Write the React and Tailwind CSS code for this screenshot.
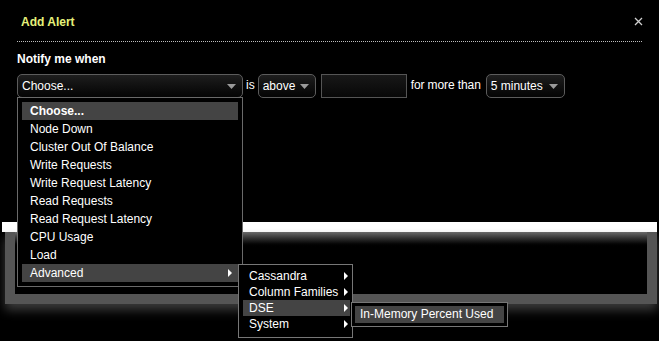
import React from "react";

const font = { fontFamily: '"Liberation Sans", Arial, sans-serif' };

const Caret = () => (
  <svg width="9" height="5" viewBox="0 0 9 5" className="shrink-0">
    <path d="M0 0h9L4.5 5z" fill="#9a9a9a" />
  </svg>
);

const RightArrow = () => (
  <svg width="4" height="8" viewBox="0 0 4 8" className="shrink-0">
    <path d="M0 0l4 4-4 4z" fill="#fff" />
  </svg>
);

const Select = ({ label, width }) => (
  <div
    className={`flex h-[24px] items-center justify-between rounded-[5px] border border-[#5c5c5c] bg-gradient-to-b from-[#1e1e1e] to-[#050505] pl-[4px] pr-[6px] text-[12px] text-white ${width}`}
  >
    <span>{label}</span>
    <Caret />
  </div>
);

const mainItems = [
  "Choose...",
  "Node Down",
  "Cluster Out Of Balance",
  "Write Requests",
  "Write Request Latency",
  "Read Requests",
  "Read Request Latency",
  "CPU Usage",
  "Load",
  "Advanced",
];

const subItems = ["Cassandra", "Column Families", "DSE", "System"];

export default function App() {
  return (
    <div
      className="relative h-[341px] w-[659px] overflow-hidden bg-black text-white"
      style={font}
    >
      {/* Header */}
      <div className="flex h-[41px] items-center justify-between pl-[21px] pr-[16px] pt-[3px]">
        <h1 className="text-[12px] font-bold text-[#e6f27a]">Add Alert</h1>
        <svg width="9" height="9" viewBox="0 0 9 9" className="-mt-[2px]">
          <path d="M1 1l7 7M8 1L1 8" stroke="#d0d0d0" strokeWidth="1.3" />
        </svg>
      </div>
      <div className="ml-[17px] w-[625px] border-t border-dotted border-[#bdbdbd]" />

      <div className="pl-[17px]">
        <p className="mt-[10px] text-[12px] font-bold leading-[14px]">Notify me when</p>

        {/* Condition row */}
        <div className="mt-[8px] flex items-center text-[12px]">
          <Select label="Choose..." width="w-[226px]" />
          <span className="ml-[3px] mr-[3px] -mt-[2px]">is</span>
          <Select label="above" width="w-[58px]" />
          <div className="ml-[5px] h-[24px] w-[86px] border border-[#555] bg-gradient-to-b from-[#181818] to-[#080808]" />
          <span className="ml-[4px] mr-[5px] -mt-[2px] tracking-[-0.1px]">for more than</span>
          <Select label="5 minutes" width="w-[79px]" />
        </div>
      </div>

      {/* Background panel behind the menu */}
      <div className="mt-[124px]">
        <div className="ml-[2px] h-[10px] w-[655px] bg-white" />
        <div className="ml-[5px] h-[72px] w-[652px] bg-[#555] px-[10px] pb-[10px] shadow-[0_6px_10px_rgba(110,110,110,0.55)]">
          <div className="h-full bg-gradient-to-b from-[#6a6a6a] via-[#000] via-[25%] to-black" />
        </div>
      </div>

      {/* Main dropdown */}
      <div className="absolute left-[17px] top-[97px] w-[226px] border border-[#6a6a6a] bg-black p-[4px] text-[12px]">
        {mainItems.map((item, i) => (
          <div
            key={item}
            className={`flex h-[18px] items-center justify-between pl-[8px] pr-[6px] leading-[18px] ${
              i === 0 || i === mainItems.length - 1 ? "bg-[#444]" : ""
            } ${i === 0 ? "font-bold" : ""}`}
          >
            <span>{item}</span>
            {item === "Advanced" && <RightArrow />}
          </div>
        ))}
      </div>

      {/* Advanced submenu */}
      <div className="absolute left-[238px] top-[264px] w-[115px] border border-[#777] bg-black pb-[5px] pl-[4px] pr-[2px] pt-[3px] text-[12px]">
        {subItems.map((item) => (
          <div
            key={item}
            className={`flex h-[16px] items-center justify-between pl-[6px] pr-[2px] leading-[16px] ${
              item === "DSE" ? "bg-[#444]" : ""
            }`}
          >
            <span>{item}</span>
            <RightArrow />
          </div>
        ))}
      </div>

      {/* DSE submenu */}
      <div className="absolute left-[351px] top-[302px] w-[157px] border border-[#777] bg-black p-[3px] text-[12px]">
        <div className="h-[17px] bg-[#444] pl-[5px] leading-[17px]">In-Memory Percent Used</div>
      </div>
    </div>
  );
}
